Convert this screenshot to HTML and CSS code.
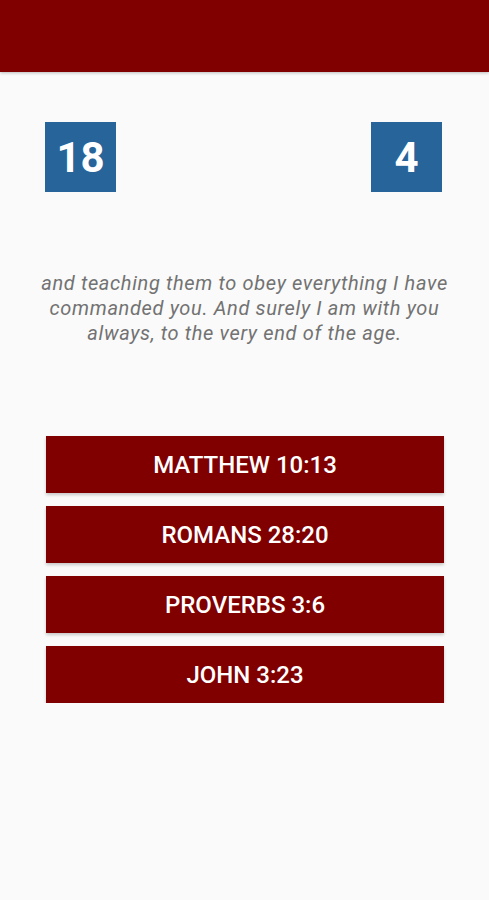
FILE: index.html
```html
<!DOCTYPE html>
<html lang="en">

<head>
    <meta charset="UTF-8">
    <meta name="viewport" content="width=device-width, initial-scale=1.0">
    <title>Verse Quiz</title>
    <link rel="stylesheet" href="styles.css">
</head>

<body>
    <header class="app-bar"></header>

    <div id="content">
        <div class="scores">
            <div class="score-box">18</div>
            <div class="score-box">4</div>
        </div>

        <p class="verse">and teaching them to obey everything I have commanded you. And surely I am with you always, to the very end of the age.</p>

        <div class="answers">
            <button class="answer-btn">Matthew 10:13</button>
            <button class="answer-btn">Romans 28:20</button>
            <button class="answer-btn">Proverbs 3:6</button>
            <button class="answer-btn">John 3:23</button>
        </div>
    </div>
</body>

</html>
```

FILE: styles.css
```css
body {
    font-family: Roboto, "Noto Sans", Arial, sans-serif;
    margin: 0;
    background-color: #fafafa;
}

.app-bar {
    background-color: #800000;
    height: 72px;
    box-shadow: 0 1px 3px rgba(0, 0, 0, 0.25);
}

#content {
    padding: 50px 45px 0 45px;
}

.scores {
    display: flex;
    justify-content: space-between;
    padding-right: 2px;
}

.score-box {
    width: 71px;
    height: 70px;
    background-color: #26649a;
    color: white;
    font-size: 42px;
    font-weight: bold;
    display: flex;
    align-items: center;
    justify-content: center;
}

.verse {
    margin: 79px -12px 0 -12px;
    text-align: center;
    font-style: italic;
    font-size: 20px;
    letter-spacing: 0.65px;
    line-height: 25px;
    color: #727272;
}

.answers {
    margin-top: 90px;
    display: flex;
    flex-direction: column;
    gap: 13px;
    padding-left: 1px;
}

.answer-btn {
    height: 57px;
    border: none;
    background-color: #800000;
    color: white;
    font-family: inherit;
    font-size: 24px;
    font-weight: 500;
    text-transform: uppercase;
    box-shadow: 0 2px 3px rgba(0, 0, 0, 0.2);
    cursor: pointer;
}
```
